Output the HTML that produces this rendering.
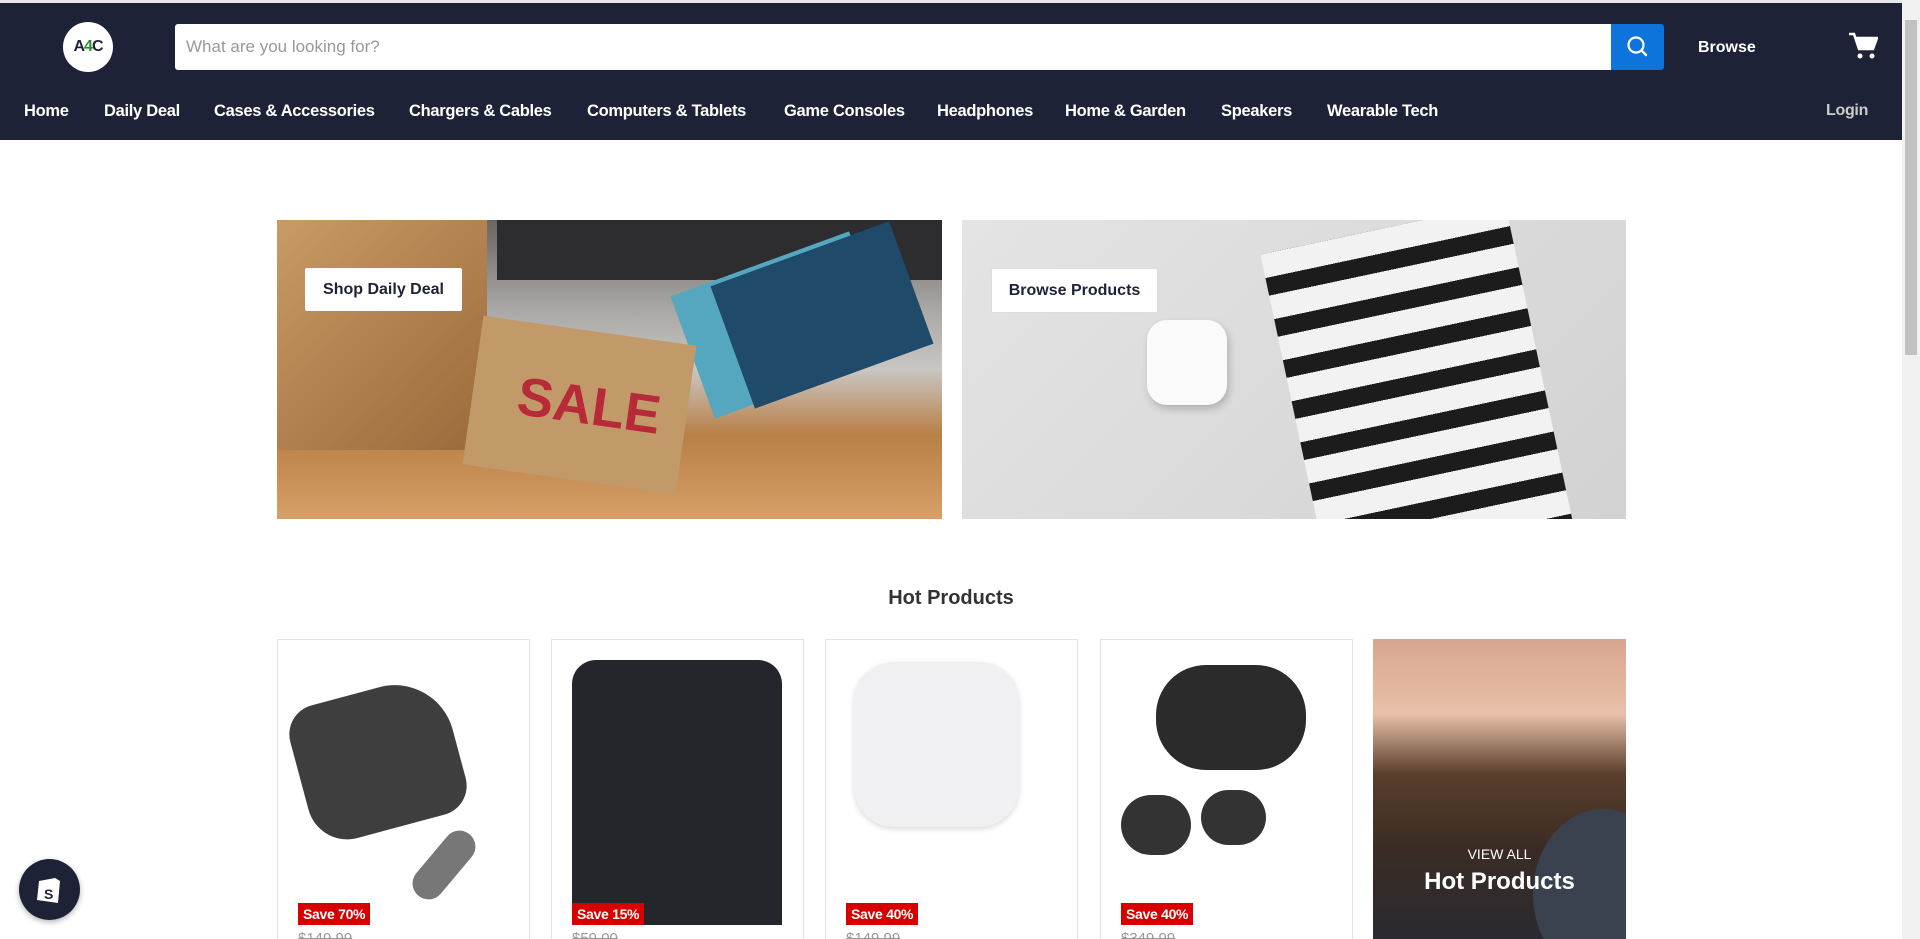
<!DOCTYPE html>
<html style="overflow:hidden;height:939px"><head><meta charset="utf-8"><style>
*{box-sizing:border-box;margin:0;padding:0}
body{width:1920px;height:939px;overflow:hidden;background:#fff;font-family:"Liberation Sans",sans-serif;position:relative}
.a{position:absolute}
#hdr{left:0;top:0;width:1902px;height:140px;background:#1e2236;border-top:3px solid #e8e8e8}
.nav{top:102px;color:#fff;font-weight:bold;font-size:16.5px;letter-spacing:-0.3px}
.btn{background:#fff;color:#1e2236;font-weight:bold;font-size:16px;text-align:center;line-height:43px;border-radius:2px}
.card{top:639px;width:253px;height:300px;border:1px solid #e3e3e3;border-bottom:none;background:#fff;overflow:hidden}
.save{top:263px;left:20px;background:#d70000;color:#fff;font-weight:bold;font-size:14px;padding:3px 5px;letter-spacing:-0.3px}
.price{top:290px;left:20px;color:#999;font-size:15px;text-decoration:line-through}
</style></head><body>
<div id="hdr" class="a"></div>
<div class="a" style="left:63px;top:22px;width:50px;height:50px;border-radius:50%;background:#fff;color:#1e2236;font-weight:bold;font-size:16px;line-height:50px;text-align:center;letter-spacing:-1px">A<span style="color:#2a8c2a">4</span>C</div>
<div class="a" style="left:175px;top:24px;width:1436px;height:46px;background:#fff;border-radius:3px 0 0 3px;color:#999;font-size:17px;line-height:46px;padding-left:11px">What are you looking for?</div>
<div class="a" style="left:1611px;top:24px;width:53px;height:46px;background:#0d74db;border-radius:0 3px 3px 0">
<svg width="53" height="46" viewBox="0 0 53 46"><circle cx="25" cy="21" r="7.5" fill="none" stroke="#fff" stroke-width="2.2"/><line x1="30.5" y1="26.5" x2="35" y2="31" stroke="#fff" stroke-width="2.4" stroke-linecap="round"/></svg></div>
<div class="a" style="left:1698px;top:39px;color:#fff;font-weight:bold;font-size:16px">Browse</div>
<svg class="a" style="left:1848px;top:32px" width="30" height="28" viewBox="0 0 30 28"><path d="M1 2h5l5 15h14l4-11H8" fill="none" stroke="#fff" stroke-width="2.5"/><path d="M8 6h21l-4 11H11z" fill="#fff"/><circle cx="12" cy="24" r="2.5" fill="#fff"/><circle cx="24" cy="24" r="2.5" fill="#fff"/></svg>
<div class="a nav" style="left:24px">Home</div>
<div class="a nav" style="left:104px">Daily Deal</div>
<div class="a nav" style="left:214px">Cases &amp; Accessories</div>
<div class="a nav" style="left:409px">Chargers &amp; Cables</div>
<div class="a nav" style="left:587px">Computers &amp; Tablets</div>
<div class="a nav" style="left:784px">Game Consoles</div>
<div class="a nav" style="left:937px">Headphones</div>
<div class="a nav" style="left:1065px">Home &amp; Garden</div>
<div class="a nav" style="left:1221px">Speakers</div>
<div class="a nav" style="left:1327px">Wearable Tech</div>
<div class="a nav" style="left:1826px;color:#ccc;font-size:16px">Login</div>
<div class="a" style="left:1902px;top:0;width:18px;height:939px;background:#f1f1f1"></div>
<div class="a" style="left:1905px;top:20px;width:12px;height:335px;background:#c1c1c1"></div>
<div class="a" style="left:277px;top:220px;width:665px;height:299px;overflow:hidden;background:linear-gradient(180deg,#6b6460 0%,#a9a8a6 30%,#c8c6c2 50%,#b97f46 72%,#d6a068 100%)">
<div class="a" style="left:0;top:0;width:210px;height:230px;background:linear-gradient(135deg,#c89a64,#9a6a3a)"></div>
<div class="a" style="left:220px;top:0;width:445px;height:60px;background:#2d2d30"></div>
<div class="a" style="left:410px;top:40px;width:190px;height:130px;background:#55a7c0;transform:rotate(-20deg)"></div>
<div class="a" style="left:450px;top:30px;width:190px;height:130px;background:#1f4a6a;transform:rotate(-20deg)"></div>
<div class="a" style="left:195px;top:110px;width:215px;height:150px;background:#c29a6a;transform:rotate(8deg)"></div>
<div class="a" style="left:240px;top:155px;color:#b72b38;font-size:54px;font-weight:bold;transform:rotate(8deg)">SALE</div>
</div>
<div class="a btn" style="left:305px;top:268px;width:157px">Shop Daily Deal</div>
<div class="a" style="left:962px;top:220px;width:664px;height:299px;overflow:hidden;background:linear-gradient(135deg,#e4e4e4,#d2d2d2)">
<div class="a" style="left:330px;top:5px;width:250px;height:330px;transform:rotate(-12deg);background:repeating-linear-gradient(180deg,#f2f2f2 0 24px,#1c1c1c 24px 42px)"></div>
<div class="a" style="left:185px;top:100px;width:80px;height:85px;border-radius:20px;background:#fafafa;box-shadow:2px 4px 8px rgba(0,0,0,.2)"></div>
</div>
<div class="a btn" style="left:991px;top:268px;width:167px;border:1px solid #ddd">Browse Products</div>
<div class="a" style="left:0;top:587px;width:1902px;text-align:center;font-size:20px;font-weight:bold;color:#333">Hot Products</div>
<div class="a card" style="left:277px">
<div class="a" style="left:20px;top:50px;width:160px;height:140px;background:#3e3e3e;border-radius:30px 60px 30px 40px;transform:rotate(-15deg)"></div>
<div class="a" style="left:150px;top:185px;width:32px;height:80px;background:#777;border-radius:16px;transform:rotate(40deg)"></div>
<div class="a save">Save 70%</div><div class="a price">$149.99</div></div>
<div class="a card" style="left:551px">
<div class="a" style="left:20px;top:20px;width:210px;height:265px;background:#24262b;border-radius:24px 24px 0 0"></div>
<div class="a save">Save 15%</div><div class="a price">$59.00</div></div>
<div class="a card" style="left:825px">
<div class="a" style="left:28px;top:22px;width:165px;height:165px;background:#f0f0f2;border-radius:40px;box-shadow:0 2px 6px rgba(0,0,0,.15)"></div>
<div class="a save">Save 40%</div><div class="a price">$149.99</div></div>
<div class="a card" style="left:1100px">
<div class="a" style="left:55px;top:25px;width:150px;height:105px;background:#2b2b2b;border-radius:50px"></div>
<div class="a" style="left:20px;top:155px;width:70px;height:60px;background:#333;border-radius:30px"></div>
<div class="a" style="left:100px;top:150px;width:65px;height:55px;background:#333;border-radius:28px"></div>
<div class="a save">Save 40%</div><div class="a price">$349.99</div></div>
<div class="a" style="left:1373px;top:639px;width:253px;height:300px;overflow:hidden;background:linear-gradient(180deg,#d8a590 0%,#e8c0a8 25%,#5a3e2c 45%,#3a2c24 70%,#2a2a30 100%)">
<div class="a" style="left:160px;top:170px;width:140px;height:170px;border-radius:50%;background:#3a4250"></div>
<div class="a" style="left:0;top:207px;width:253px;text-align:center;color:#fff;font-size:14px">VIEW ALL</div>
<div class="a" style="left:0;top:229px;width:253px;text-align:center;color:#fff;font-size:24px;font-weight:bold">Hot Products</div>
</div>
<div class="a" style="left:19px;top:859px;width:61px;height:61px;border-radius:50%;background:#1e2236;box-shadow:0 2px 6px rgba(0,0,0,.3)">
<svg width="61" height="61" viewBox="0 0 61 61"><path d="M20 22l16-3 5 3-2 22-21-3z" fill="#fff"/><text x="25" y="40" font-family="Liberation Sans" font-weight="bold" font-size="14" fill="#1e2236">S</text></svg></div>
</body></html>
